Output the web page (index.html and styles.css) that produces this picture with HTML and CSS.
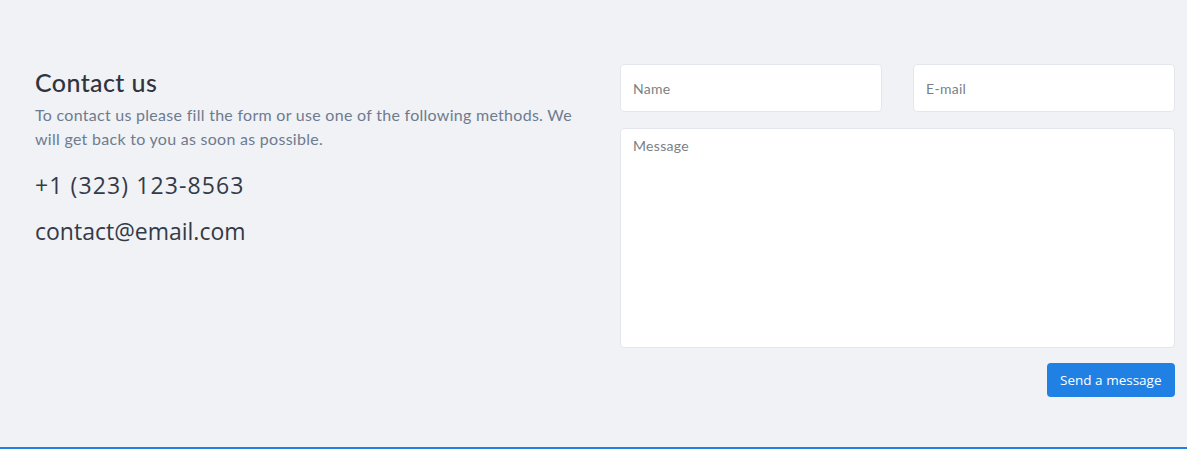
FILE: index.html
```html
<!DOCTYPE html>
<html lang="en">
<head>
<meta charset="utf-8">
<title>Contact us</title>
<link rel="stylesheet" href="styles.css">
</head>
<body>
<section class="contact">
  <div class="info">
    <h2 class="title">Contact us</h2>
    <p class="lead">To contact us please fill the form or use one of the following methods. We will get back to you as soon as possible.</p>
    <p class="method phone">+1 (323) 123-8563</p>
    <p class="method">contact@email.com</p>
  </div>
  <form class="form">
    <div class="row">
      <input class="field" type="text" placeholder="Name">
      <input class="field" type="email" placeholder="E-mail">
    </div>
    <textarea class="field message" placeholder="Message"></textarea>
    <div class="actions">
      <button class="send" type="button">Send a message</button>
    </div>
  </form>
</section>
</body>
</html>
```
FILE: styles.css
```css
* { box-sizing: border-box; }
html, body { margin: 0; height: 100%; }
body {
  background: #f0f2f6;
  font-family: "Lato", "Open Sans", sans-serif;
  color: #343a46;
}
.contact {
  display: grid;
  grid-template-columns: 1fr 1fr;
  gap: 30px;
  padding: 64px 12px 0 35px;
  height: 449px;
  border-bottom: 2px solid #2180e4;
}
.title {
  margin: 3px 0 0;
  font-size: 25px;
  font-weight: 500;
  line-height: 30px;
  letter-spacing: 0.4px;
  color: #2f3440;
}
.lead {
  margin: 6px 0 0;
  font-size: 16px;
  line-height: 24px;
  letter-spacing: 0.28px;
  color: #6e7b8f;
}
.method {
  margin: 8px 0 0;
  font-family: "Open Sans", sans-serif;
  font-size: 23px;
  line-height: 38px;
  color: #343a46;
}
.phone { margin-top: 15px; letter-spacing: 1.1px; }
.form { display: flex; flex-direction: column; }
.row {
  display: grid;
  grid-template-columns: 1fr 1fr;
  gap: 31px;
}
.field {
  display: block;
  width: 100%;
  height: 48px;
  padding: 0 12px;
  border: 1px solid #e3e6ea;
  border-radius: 4px;
  background: #fff;
  font-family: "Lato", "Open Sans", sans-serif;
  font-size: 14px;
  letter-spacing: 0.3px;
  color: #333;
  outline: none;
}
.field::placeholder { color: #7a7f86; }
.message {
  margin-top: 16px;
  height: 220px;
  padding: 8px 12px;
  resize: none;
}
.actions {
  display: flex;
  justify-content: flex-end;
  margin-top: 15px;
}
.send {
  height: 34px;
  padding: 0 13.5px;
  border: 0;
  border-radius: 4px;
  background: #2180e4;
  color: #fff;
  font-family: "Open Sans", sans-serif;
  font-size: 13.5px;
  font-weight: 500;
}
```
